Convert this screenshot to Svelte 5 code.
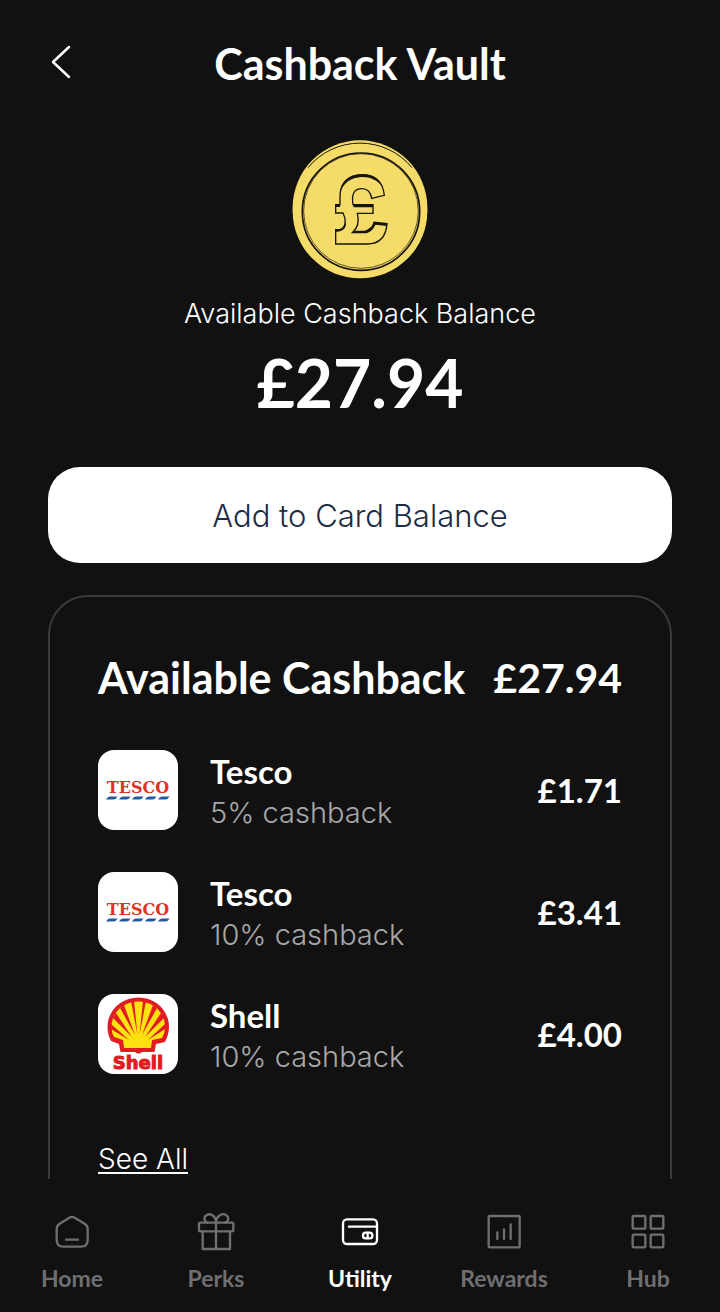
<script>
  let tab = "Utility"

  const tabs = ["Home", "Perks", "Utility", "Rewards", "Hub"]

  const balance = "£27.94"

  const cashback = [
    { brand: "Tesco", rate: "5% cashback", amount: "£1.71" },
    { brand: "Tesco", rate: "10% cashback", amount: "£3.41" },
    { brand: "Shell", rate: "10% cashback", amount: "£4.00" },
  ]
</script>

<div class="screen">
  <main>
    <header>
      <button class="back" aria-label="Back">
        <svg width="24" height="36" viewBox="0 0 24 36">
          <path d="M21 3 5 18l16 15" fill="none" stroke="#fff" stroke-width="2.5" stroke-linecap="round" stroke-linejoin="round" />
        </svg>
      </button>
      <h1>Cashback Vault</h1>
    </header>

    <section class="balance">
      <svg class="coin" width="136" height="140" viewBox="36 26 408 420" aria-hidden="true">
        <circle cx="240" cy="232" r="202" fill="#f5dc69" />
        <circle cx="240" cy="242" r="202" fill="#f5dc69" />
        <path d="M84 112A202 202 0 0 1 396 112" fill="none" stroke="#16140c" stroke-width="3" />
        <circle cx="243" cy="244" r="176" fill="none" stroke="#16140c" stroke-width="5" />
        <circle cx="243" cy="242" r="172" fill="none" stroke="#16140c" stroke-width="2" />
        <path
          d="M313 195C308 150 280 133 246 133C205 133 180 160 180 198V223H167V248H189C198 264 200 292 180 298H167V341H262C300 341 318 318 321 280L282 276C278 292 272 302 258 307H217C234 292 238 272 232 249H279V223H219C214 192 222 175 246 175C264 175 272 186 275 204Z"
          fill="none" stroke="#16140c" stroke-width="4" />
        <path
          d="M180 188C182 152 208 132 246 132C276 132 298 146 308 170C292 149 272 140 246 140C212 141 188 160 180 188ZM167 223H180V230H167ZM219 223H279V231H221ZM167 298C184 298 194 290 197 272C201 290 192 305 167 304ZM217 307L225 301H254C268 296 278 288 282 276L321 280V287L286 283C280 298 270 306 256 308Z"
          fill="#16140c" />
      </svg>
      <p>Available Cashback Balance</p>
      <strong>{balance}</strong>
    </section>

    <button class="add">Add to Card Balance</button>

    <section class="card">
      <div class="card-head">
        <h2>Available Cashback</h2>
        <span>{balance}</span>
      </div>

      <ul>
        {#each cashback as c}
          <li>
            <svg class="logo" viewBox="0 0 80 80" aria-hidden="true">
              {#if c.brand === "Tesco"}
                <text x="40" y="43" text-anchor="middle" class="tesco">TESCO</text>
                {#each [0, 1, 2, 3, 4] as i}
                  <path d="M{8 + i * 13} 49.500q1.500-3 4-3h7.500q-1.500 3-4 3z" fill="#23599f" />
                {/each}
              {:else}
                <path d="M40.500 3.500C58 3.500 71 17 71 33C71 39 69 44 67 48L58 50L56.500 58H44Q40.500 61 37 58H22.500L21 50L13 47C11 43 9.500 39 9.500 33C9.500 17 23 3.500 40.500 3.500Z" fill="#e11b22" />
                <path d="M40.500 7.500C55 7.500 67 18 67 33Q67 39 64 44L54 46L53 54H26L25 46L16 43Q13.500 39 13.500 33C13.500 18 26 7.500 40.500 7.500Z" fill="#fde111" />
                <path
                  d="M39.500 41 33 7H36ZM41.500 41 45 7H48ZM37 41 22 14 26 11ZM44 41 55 11 59 14ZM34 43 15 24 18 19ZM47 43 63 19 66 24ZM31 46 13 35V30ZM50 46 67 30V35Z"
                  fill="#e11b22" />
                <text x="40" y="75" text-anchor="middle" class="shell">Shell</text>
              {/if}
            </svg>
            <div class="info">
              <h3>{c.brand}</h3>
              <p>{c.rate}</p>
            </div>
            <span class="amount">{c.amount}</span>
          </li>
        {/each}
      </ul>

      <a href="#all">See All</a>
    </section>
  </main>

  <nav>
    {#each tabs as t}
      <button class:active={t === tab} on:click={() => (tab = t)}>
        <svg width="40" height="40" viewBox="0 0 120 120" aria-hidden="true">
          {#if t === "Home"}
            <path d="M52 17Q60 12 68 17L98 35Q107 41 107 52V84Q107 104 87 104H34Q14 104 14 84V52Q14 41 23 35ZM42 83H78" />
          {:else if t === "Perks"}
            <rect x="9" y="32" width="103" height="26" rx="4" />
            <path d="M20 58V111H102V58M60 32V111M60 32C60 12 44 2 32 9C20 17 26 30 34 32M60 32C60 12 78 2 90 9C102 17 96 30 88 32" />
          {:else if t === "Utility"}
            <rect x="9" y="22" width="102" height="74" rx="12" />
            <path d="M27 44H111" />
            <rect x="69" y="62" width="28" height="17" rx="8" />
            <path d="M83 63V78" />
          {:else if t === "Rewards"}
            <rect x="14" y="12" width="93" height="94" rx="3" />
            <path d="M40 61V81M60 52V81M80 37V81" />
          {:else}
            <rect x="14" y="12" width="38" height="38" rx="3" />
            <rect x="68" y="12" width="38" height="38" rx="3" />
            <rect x="14" y="68" width="38" height="38" rx="3" />
            <rect x="68" y="68" width="38" height="38" rx="3" />
          {/if}
        </svg>
        {t}
      </button>
    {/each}
  </nav>
</div>

<style>
  :global(body) {
    background: #111111;
  }

  .screen {
    display: flex;
    flex-direction: column;
    height: 100vh;
    background: #111111;
    color: #ffffff;
    font-family: Lato, sans-serif;
  }

  main {
    flex: 1;
    min-height: 0;
    overflow-y: auto;
    scrollbar-width: none;
    padding: 32px 48px 0;
  }

  h1,
  h2,
  h3,
  p,
  ul {
    margin: 0;
    padding: 0;
  }

  button {
    border: none;
    background: none;
    padding: 0;
    font-family: inherit;
    cursor: pointer;
  }

  header {
    display: grid;
    grid-template-columns: 48px 1fr 48px;
    align-items: center;
    height: 60px;
    text-align: center;
  }

  .back {
    display: flex;
  }

  h1,
  h2,
  .card-head span {
    font-size: 43px;
    font-weight: 700;
    line-height: 48px;
  }

  h1 {
    padding-top: 4px;
  }

  .card-head span {
    font-size: 41px;
  }

  .balance {
    display: flex;
    flex-direction: column;
    align-items: center;
    padding: 47px 0;
  }

  .balance p {
    margin-top: 19px;
    font-family: Inter, sans-serif;
    font-size: 27px;
    font-weight: 300;
    line-height: 32px;
  }

  .balance strong {
    margin-top: 16px;
    font-size: 66px;
    line-height: 74px;
  }

  .add {
    width: 100%;
    height: 96px;
    border-radius: 32px;
    background: #ffffff;
    color: #1d2c44;
    font-family: Inter, sans-serif;
    font-size: 31px;
    font-weight: 300;
  }

  .card {
    margin-top: 32px;
    padding: 57px 48px 48px;
    border: 2px solid #3a3a3a;
    border-radius: 40px;
  }

  .card-head {
    display: flex;
    justify-content: space-between;
    white-space: nowrap;
  }

  ul {
    display: flex;
    flex-direction: column;
    gap: 32px;
    margin-top: 43px;
    list-style: none;
  }

  li {
    display: flex;
    align-items: center;
    gap: 32px;
  }

  .logo {
    width: 80px;
    height: 80px;
    border-radius: 16px;
    background: #ffffff;
  }

  .tesco {
    font-family: "DejaVu Serif", serif;
    font-size: 16px;
    font-weight: 700;
    fill: #dd3429;
  }

  .shell {
    font-family: "DejaVu Sans", sans-serif;
    font-size: 18px;
    font-weight: 700;
    fill: #e11b22;
    stroke: #e11b22;
  }

  .info {
    flex: 1;
    padding-top: 6px;
  }

  h3,
  .amount {
    font-size: 33px;
    font-weight: 700;
    line-height: 40px;
  }

  .info p {
    font-family: Inter, sans-serif;
    font-size: 29px;
    font-weight: 300;
    line-height: 44px;
    color: #a8a8a8;
  }

  .card a {
    display: inline-block;
    margin-top: 60px;
    color: #ffffff;
    font-family: Inter, sans-serif;
    font-size: 28px;
    font-weight: 300;
    line-height: 40px;
    text-underline-offset: 3px;
  }

  nav {
    display: grid;
    grid-template-columns: repeat(5, 1fr);
    height: 133px;
  }

  nav button {
    display: flex;
    flex-direction: column;
    align-items: center;
    gap: 12px;
    padding-top: 33px;
    color: #6f6f71;
    font-size: 23px;
    font-weight: 700;
    line-height: 28px;
  }

  nav .active {
    color: #ffffff;
  }

  nav svg {
    fill: none;
    stroke: currentColor;
    stroke-width: 7;
    stroke-linecap: round;
    stroke-linejoin: round;
  }
</style>
